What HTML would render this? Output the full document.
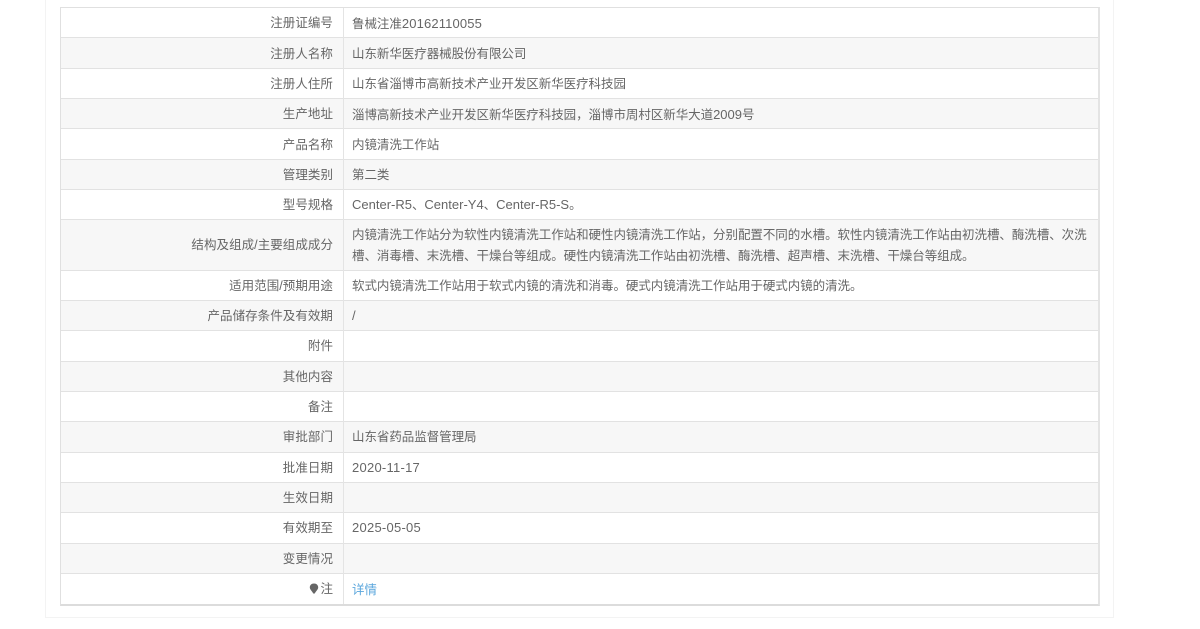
<!DOCTYPE html>
<html lang="zh">
<head>
<meta charset="utf-8">
<style>
html,body{margin:0;padding:0;background:#fff;}
body{width:1200px;height:629px;position:relative;overflow:hidden;font-family:"Liberation Sans","Noto Sans CJK SC",sans-serif;font-size:12.5px;color:#666;}
#panel{position:absolute;left:45px;top:-2px;width:1067px;height:618px;border:1px solid #f3f3f3;box-sizing:content-box;}
#tb{position:absolute;left:60px;top:7px;width:1040px;height:599px;border:1px solid #e0e0e0;border-bottom:2px solid #dcdcdc;border-right:2px solid #e4e4e4;box-sizing:border-box;}
.r{position:absolute;left:61px;width:1037px;border-bottom:1px solid #e2e2e2;box-sizing:border-box;}
.g{background:#f7f7f7;}
.l{position:absolute;right:765px;top:0;white-space:nowrap;text-align:right;letter-spacing:.05px;}
.v{position:absolute;left:291px;top:0;white-space:nowrap;letter-spacing:-.05px;}
.n{font-size:13px;letter-spacing:.15px;}
.c{font-size:13px;letter-spacing:0;}
.d{font-size:13px;letter-spacing:.25px;}
#div{position:absolute;left:343px;top:8px;width:1px;height:596px;background:#e4e4e4;}
a{color:#5aa6dc;text-decoration:none;}
</style>
</head>
<body>
<div id="panel"></div>
<div class="r" style="top:8px;height:30px;line-height:31px;"><span class="l">注册证编号</span><span class="v">鲁械注准<span class="n">20162110055</span></span></div>
<div class="r g" style="top:38px;height:31px;line-height:32px;"><span class="l">注册人名称</span><span class="v">山东新华医疗器械股份有限公司</span></div>
<div class="r" style="top:69px;height:30px;line-height:31px;"><span class="l">注册人住所</span><span class="v">山东省淄博市高新技术产业开发区新华医疗科技园</span></div>
<div class="r g" style="top:99px;height:30px;line-height:31px;"><span class="l">生产地址</span><span class="v">淄博高新技术产业开发区新华医疗科技园，淄博市周村区新华大道<span class="c">2009</span>号</span></div>
<div class="r" style="top:129px;height:31px;line-height:32px;"><span class="l">产品名称</span><span class="v">内镜清洗工作站</span></div>
<div class="r g" style="top:160px;height:30px;line-height:30px;"><span class="l">管理类别</span><span class="v">第二类</span></div>
<div class="r" style="top:190px;height:30px;line-height:30px;"><span class="l">型号规格</span><span class="v"><span class="c">Center-R5</span>、<span class="c">Center-Y4</span>、<span class="c">Center-R5-S</span>。</span></div>
<div class="r g" style="top:220px;height:51px;"><span class="l" style="line-height:51px;">结构及组成/主要组成成分</span><span class="v" style="top:5px;line-height:20.5px;">内镜清洗工作站分为软性内镜清洗工作站和硬性内镜清洗工作站，分别配置不同的水槽。软性内镜清洗工作站由初洗槽、酶洗槽、次洗<br>槽、消毒槽、末洗槽、干燥台等组成。硬性内镜清洗工作站由初洗槽、酶洗槽、超声槽、末洗槽、干燥台等组成。</span></div>
<div class="r" style="top:271px;height:30px;line-height:30px;"><span class="l">适用范围/预期用途</span><span class="v">软式内镜清洗工作站用于软式内镜的清洗和消毒。硬式内镜清洗工作站用于硬式内镜的清洗。</span></div>
<div class="r g" style="top:301px;height:30px;line-height:30px;"><span class="l">产品储存条件及有效期</span><span class="v"><span class="c">/</span></span></div>
<div class="r" style="top:331px;height:31px;line-height:31px;"><span class="l">附件</span></div>
<div class="r g" style="top:362px;height:30px;line-height:30px;"><span class="l">其他内容</span></div>
<div class="r" style="top:392px;height:30px;line-height:30px;"><span class="l">备注</span></div>
<div class="r g" style="top:422px;height:31px;line-height:31px;"><span class="l">审批部门</span><span class="v">山东省药品监督管理局</span></div>
<div class="r" style="top:453px;height:30px;line-height:30px;"><span class="l">批准日期</span><span class="v"><span class="d">2020-11-17</span></span></div>
<div class="r g" style="top:483px;height:30px;line-height:30px;"><span class="l">生效日期</span></div>
<div class="r" style="top:513px;height:31px;line-height:30px;"><span class="l">有效期至</span><span class="v"><span class="d">2025-05-05</span></span></div>
<div class="r g" style="top:544px;height:30px;line-height:30px;"><span class="l">变更情况</span></div>
<div class="r" style="top:574px;height:30px;line-height:30px;border-bottom:none;"><span class="l">注</span><span class="v" style="top:1px;"><a>详情</a></span></div>
<svg style="position:absolute;left:309px;top:583px;" width="10" height="12" viewBox="0 0 10 12"><path d="M5 .5C2.4.5.8 2.2.8 4.4c0 2.3 2.6 4 3.4 6.1h1.6c.8-2.1 3.4-3.8 3.4-6.1C9.200 2.200 7.600.5 5 .5z" fill="#666"/></svg>
<div id="div"></div>
<div id="tb"></div>
</body>
</html>
